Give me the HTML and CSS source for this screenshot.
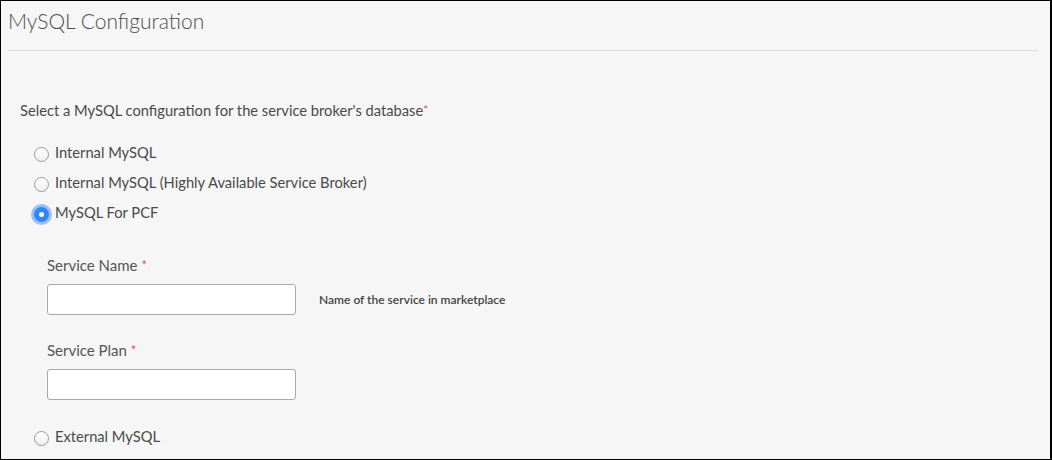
FILE: index.html
```html
<!DOCTYPE html>
<html>
<head>
<meta charset="utf-8">
<link rel="stylesheet" href="styles.css">
</head>
<body>
<div class="frame">
  <div class="header">
    <h1 class="title">MySQL Configuration</h1>
  </div>
  <div class="content">
    <div class="question">Select a MySQL configuration for the service broker's database<span class="req">*</span></div>
    <div class="options">
      <div class="option"><span class="radio"></span><span class="opt-label">Internal MySQL</span></div>
      <div class="option"><span class="radio"></span><span class="opt-label">Internal MySQL (Highly Available Service Broker)</span></div>
      <div class="option"><span class="radio checked"></span><span class="opt-label">MySQL For PCF</span></div>
    </div>
    <div class="nested">
      <div class="field-label first">Service Name <span class="req">*</span></div>
      <div class="field-row">
        <div class="input"></div>
        <div class="help">Name of the service in marketplace</div>
      </div>
      <div class="field-label second">Service Plan <span class="req">*</span></div>
      <div class="field-row">
        <div class="input"></div>
      </div>
    </div>
    <div class="options last">
      <div class="option"><span class="radio"></span><span class="opt-label">External MySQL</span></div>
    </div>
  </div>
</div>
</body>
</html>
```

FILE: styles.css
```css
html, body {
  margin: 0;
  padding: 0;
}
body {
  font-family: "Lato", "Open Sans", sans-serif;
  color: #4a4a4a;
}
.frame {
  width: 1052px;
  height: 460px;
  box-sizing: border-box;
  border: 1px solid #000;
  border-right-width: 2px;
  background: #f6f6f6;
  overflow: hidden;
}
.header {
  margin: 0 12px 0 7px;
  height: 49px;
  border-bottom: 1px solid #dcdcdc;
}
.title {
  margin: 0;
  padding-top: 5px;
  font-size: 21px;
  line-height: 30px;
  font-weight: 300;
  color: #4f4f4f;
}
.content {
  padding-left: 19px;
}
.question {
  margin-top: 49px;
  font-size: 14.7px;
  line-height: 20px;
  color: #4a4a4a;
}
.req {
  color: #e84c4c;
  font-size: 12px;
  vertical-align: top;
}
.options {
  margin-top: 17px;
  display: flex;
  flex-direction: column;
}
.options.last {
  margin-top: 21px;
}
.option {
  height: 30px;
  display: flex;
  align-items: center;
  padding-left: 14px;
}
.radio {
  width: 15px;
  height: 15px;
  box-sizing: border-box;
  border: 1px solid #9a9a9a;
  border-radius: 50%;
  background: linear-gradient(#fff, #f0f0f0);
  margin-top: 4px;
  margin-right: 6px;
  flex: none;
}
.radio.checked {
  border: none;
  background: #2f86f6;
  box-shadow: 0 0 0 3px rgba(80, 150, 250, 0.55);
  position: relative;
}
.radio.checked::after {
  content: "";
  position: absolute;
  left: 5px;
  top: 5px;
  width: 5px;
  height: 5px;
  border-radius: 50%;
  background: #fff;
}
.opt-label {
  font-size: 14.7px;
  line-height: 20px;
  color: #4a4a4a;
}
.nested {
  padding-left: 27px;
}
.field-label {
  font-size: 15px;
  line-height: 20px;
  color: #555;
}
.field-label .req {
  font-size: 13px;
}
.field-label.first {
  margin-top: 28px;
}
.field-label.second {
  margin-top: 25px;
}
.field-row {
  margin-top: 9px;
  display: flex;
  align-items: center;
}
.input {
  width: 249px;
  height: 31px;
  box-sizing: border-box;
  border: 1px solid #a9a9a9;
  border-radius: 3px;
  background: #fff;
}
.help {
  margin-left: 23px;
  font-size: 12px;
  font-weight: 600;
  color: #444;
}
```
